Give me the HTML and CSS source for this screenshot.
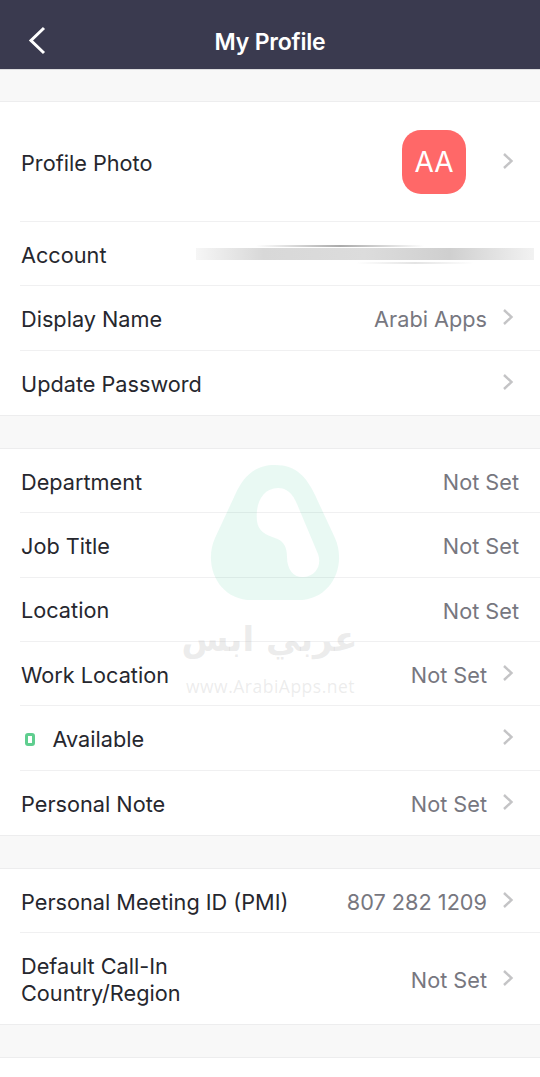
FILE: index.html
```html
<!DOCTYPE html>
<html lang="en">
<head>
  <meta charset="UTF-8" />
  <meta name="viewport" content="width=device-width, initial-scale=1.0" />
  <title>My Profile</title>
  <link rel="stylesheet" href="styles.css">
</head>
<body>
  <div class="screen">
    <header class="topbar">
      <svg class="back" width="18" height="30" viewBox="0 0 18 30"><path d="M16 2 L3 14.5 L16 27" fill="none" stroke="#fff" stroke-width="3"/></svg>
      <h1>My Profile</h1>
    </header>

    <section class="group">
      <div class="row row-photo">
        <span class="label">Profile Photo</span>
        <span class="avatar">AA</span>
        <svg class="chev" width="12" height="18" viewBox="0 0 12 18"><path d="M2 2 L9.5 9 L2 16" fill="none" stroke="#c4c4c6" stroke-width="2.4"/></svg>
      </div>
      <div class="row row-account">
        <span class="label">Account</span>
        <div class="smudge"></div>
      </div>
      <div class="row">
        <span class="label">Display Name</span>
        <span class="value">Arabi Apps</span>
        <svg class="chev" width="12" height="18" viewBox="0 0 12 18"><path d="M2 2 L9.5 9 L2 16" fill="none" stroke="#c4c4c6" stroke-width="2.4"/></svg>
      </div>
      <div class="row">
        <span class="label">Update Password</span>
        <svg class="chev" width="12" height="18" viewBox="0 0 12 18"><path d="M2 2 L9.5 9 L2 16" fill="none" stroke="#c4c4c6" stroke-width="2.4"/></svg>
      </div>
    </section>

    <section class="group">
      <div class="row">
        <span class="label">Department</span>
        <span class="value">Not Set</span>
      </div>
      <div class="row">
        <span class="label">Job Title</span>
        <span class="value">Not Set</span>
      </div>
      <div class="row">
        <span class="label">Location</span>
        <span class="value">Not Set</span>
      </div>
      <div class="row">
        <span class="label">Work Location</span>
        <span class="value">Not Set</span>
        <svg class="chev" width="12" height="18" viewBox="0 0 12 18"><path d="M2 2 L9.5 9 L2 16" fill="none" stroke="#c4c4c6" stroke-width="2.4"/></svg>
      </div>
      <div class="row">
        <span class="status-dot"></span>
        <span class="label">Available</span>
        <svg class="chev" width="12" height="18" viewBox="0 0 12 18"><path d="M2 2 L9.5 9 L2 16" fill="none" stroke="#c4c4c6" stroke-width="2.4"/></svg>
      </div>
      <div class="row">
        <span class="label">Personal Note</span>
        <span class="value">Not Set</span>
        <svg class="chev" width="12" height="18" viewBox="0 0 12 18"><path d="M2 2 L9.5 9 L2 16" fill="none" stroke="#c4c4c6" stroke-width="2.4"/></svg>
      </div>
    </section>

    <section class="group">
      <div class="row">
        <span class="label">Personal Meeting ID (PMI)</span>
        <span class="value">807 282 1209</span>
        <svg class="chev" width="12" height="18" viewBox="0 0 12 18"><path d="M2 2 L9.5 9 L2 16" fill="none" stroke="#c4c4c6" stroke-width="2.4"/></svg>
      </div>
      <div class="row row-tall">
        <span class="label">Default Call-In<br>Country/Region</span>
        <span class="value">Not Set</span>
        <svg class="chev" width="12" height="18" viewBox="0 0 12 18"><path d="M2 2 L9.5 9 L2 16" fill="none" stroke="#c4c4c6" stroke-width="2.4"/></svg>
      </div>
    </section>

    <section class="group group-last"></section>

    <!-- watermark sits over the list -->
    <div class="watermark">
      <svg class="wm-logo" width="130" height="136" viewBox="0 0 130 136">
        <path fill-rule="evenodd" fill="#2ac78c" fill-opacity="0.1" d="M65 0 C87 0 97 13 105 30 L125 73 C137 100 122 135 88 135 L42 135 C8 135 -7 100 5 73 L25 30 C33 13 43 0 65 0 Z M68 23 C53 23 45 38 47 56 C48 66 56 70 65 73 C74 76 77 82 77 92 C77 105 84 113 94 112 C106 111 112 100 108 89 L87 39 C83 29 77 23 68 23 Z"/>
      </svg>
      <div class="wm-arabic" dir="rtl" lang="ar">عربي ابس</div>
      <div class="wm-url">www.ArabiApps.net</div>
    </div>
  </div>
</body>
</html>
```

FILE: styles.css
```css
* {
  box-sizing: border-box;
}

body {
  margin: 0;
  background: #f8f8f8;
  font-family: 'Inter', 'Roboto', sans-serif;
  color: #26272e;
}

.screen {
  position: relative;
  width: 540px;
  height: 1077px;
  overflow: hidden;
}

.topbar {
  height: 70px;
  padding-top: 15px;
  background: #3a3a4f;
  border-bottom: 1px solid #dcdcdf;
  display: flex;
  align-items: center;
  justify-content: center;
  position: relative;
}

.topbar h1 {
  margin: 0;
  color: #fff;
  font-size: 23px;
  font-weight: 600;
  letter-spacing: -0.2px;
}

.back {
  position: absolute;
  left: 28px;
  top: 26px;
}

.group {
  background: #fff;
  border-top: 1px solid #ededee;
  border-bottom: 1px solid #ededee;
  margin-top: 32px;
}

.topbar + .group {
  margin-top: 31px;
}

.group-last {
  height: 40px;
  border-bottom: none;
}

.row {
  display: flex;
  align-items: center;
  height: 64.33px;
  margin-left: 20px;
  padding-top: 3px;
  padding-right: 21px;
  border-bottom: 1px solid #f0f0f1;
  font-size: 21.7px;
}

.row:last-child {
  border-bottom: none;
}

.row-photo {
  height: 120px;
}

.row-tall {
  height: 90.67px;
}

.label {
  flex: 1;
  margin-left: 1px;
  line-height: 27px;
}

.value {
  color: #77777f;
}

.chev {
  margin-left: 15px;
  margin-right: 5px;
  margin-top: -5px;
}

.avatar {
  width: 64px;
  height: 64px;
  margin-top: -3px;
  margin-right: 21px;
  border-radius: 19px;
  background: #ff6868;
  color: #fff;
  font-size: 28px;
  display: flex;
  align-items: center;
  justify-content: center;
}

.row-account {
  position: relative;
}

/* blurred-out email */
.smudge {
  position: absolute;
  left: 176px;
  right: 6px;
  top: 26px;
  height: 12px;
  background: linear-gradient(90deg, #f6f6f6, #d8d8d8 20%, #dcdcdc 50%, #cfcfcf 75%, #f2f2f2);
}

.smudge::before {
  content: "";
  position: absolute;
  left: 60px;
  right: 110px;
  top: -3px;
  height: 2px;
  background: linear-gradient(90deg, transparent, #aaa 50%, transparent);
}

.smudge::after {
  content: "";
  position: absolute;
  left: 160px;
  right: 60px;
  bottom: -4px;
  height: 2px;
  background: linear-gradient(90deg, transparent, #e4e4e4 50%, transparent);
}

.status-dot {
  width: 10px;
  height: 13px;
  margin: 0 17.5px 0 5px;
  border: 3px solid #5fce8f;
  border-radius: 3px;
}

.status-dot + .label {
  margin-left: 0;
}

.watermark {
  position: absolute;
  left: 150px;
  top: 465px;
  width: 240px;
  display: flex;
  flex-direction: column;
  align-items: center;
  pointer-events: none;
}

.wm-logo {
  margin-left: 10px;
}

.wm-arabic {
  margin-top: 15px;
  margin-left: -1px;
  font-family: 'DejaVu Sans', sans-serif;
  font-size: 34px;
  line-height: 46px;
  font-weight: 700;
  color: rgba(190, 190, 190, 0.3);
}

.wm-url {
  margin-top: 12px;
  margin-left: 1px;
  font-family: 'Open Sans', sans-serif;
  font-size: 17.5px;
  letter-spacing: 0.5px;
  color: rgba(180, 180, 180, 0.25);
}
```
